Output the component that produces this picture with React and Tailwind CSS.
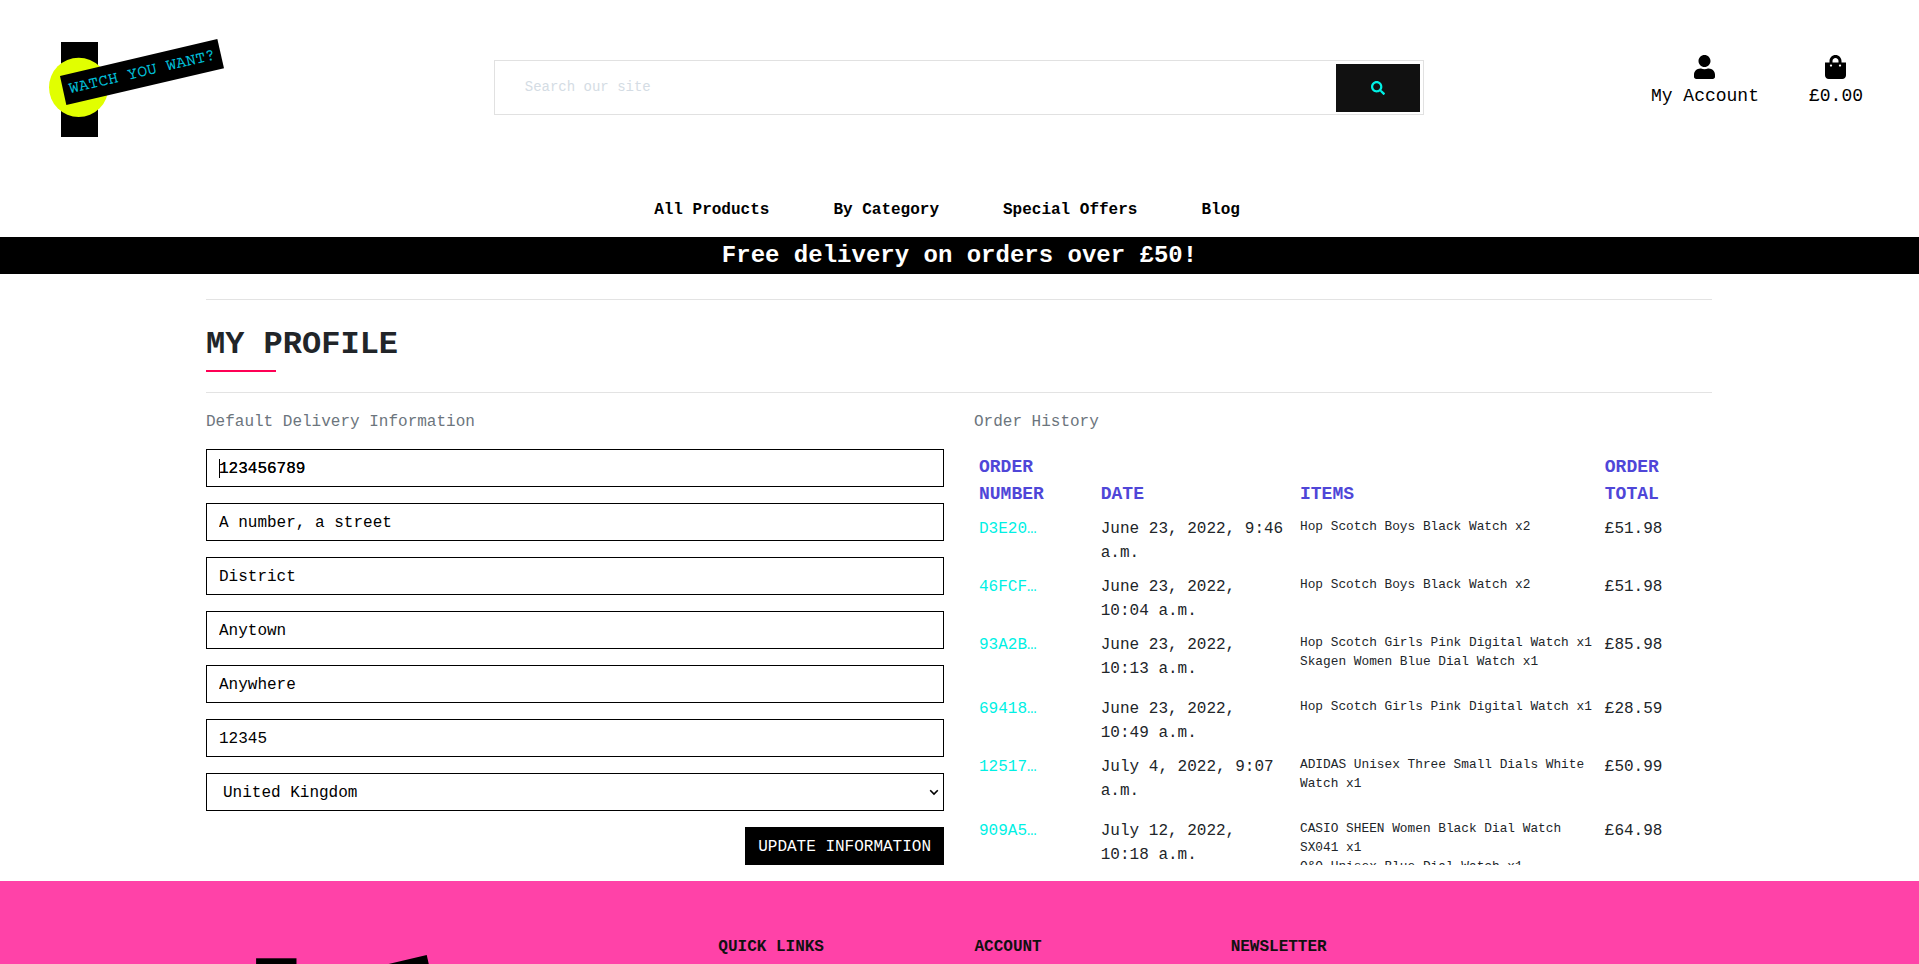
import { FaSearch, FaShoppingBag, FaUser } from "react-icons/fa";

const navLinks = ["All Products", "By Category", "Special Offers", "Blog"];

const fields = [
  { id: "phone", label: "Phone number", value: "123456789", active: true },
  { id: "street1", label: "Street address 1", value: "A number, a street" },
  { id: "street2", label: "Street address 2", value: "District" },
  { id: "town", label: "Town or city", value: "Anytown" },
  { id: "county", label: "County", value: "Anywhere" },
  { id: "postcode", label: "Postcode", value: "12345" },
];

const orders = [
  { id: "D3E20…", date: "June 23, 2022, 9:46 a.m.", items: ["Hop Scotch Boys Black Watch x2"], total: "£51.98" },
  { id: "46FCF…", date: "June 23, 2022, 10:04 a.m.", items: ["Hop Scotch Boys Black Watch x2"], total: "£51.98" },
  {
    id: "93A2B…",
    date: "June 23, 2022, 10:13 a.m.",
    items: ["Hop Scotch Girls Pink Digital Watch x1", "Skagen Women Blue Dial Watch x1"],
    total: "£85.98",
  },
  { id: "69418…", date: "June 23, 2022, 10:49 a.m.", items: ["Hop Scotch Girls Pink Digital Watch x1"], total: "£28.59" },
  { id: "12517…", date: "July 4, 2022, 9:07 a.m.", items: ["ADIDAS Unisex Three Small Dials White Watch x1"], total: "£50.99" },
  {
    id: "909A5…",
    date: "July 12, 2022, 10:18 a.m.",
    items: ["CASIO SHEEN Women Black Dial Watch SX041 x1", "Q&Q Unisex Blue Dial Watch x1"],
    total: "£64.98",
  },
];

function Logo({ className }) {
  return (
    <svg viewBox="147 117 525 294" className={className} role="img" aria-label="Watch you want?">
      <rect x="183" y="126" width="111" height="285" fill="#000" />
      <circle cx="236" cy="262" r="89" fill="#e1ff00" />
      <polygon points="180,228 652,117 672,205 199,315" fill="#000" />
      <text
        transform="translate(211 280) rotate(-13.2)"
        fill="#00bcd4"
        fontSize="50"
        fontFamily="'Courier Prime', 'Liberation Mono', monospace"
      >
        WATCH YOU WANT?
      </text>
    </svg>
  );
}

function Header() {
  return (
    <header>
      <div className="grid h-[175px] grid-cols-[1fr_2fr_1fr] items-center">
        <a href="#home" className="pl-[49px]">
          <Logo className="h-[98px] w-[175px]" />
        </a>
        <form className="mr-[15px] ml-[14px] flex h-[55px] items-center border border-[#e1e1e1] pr-[3px]" onSubmit={(e) => e.preventDefault()}>
          <input
            type="search"
            aria-label="Search our site"
            placeholder="Search our site"
            className="h-full min-w-0 flex-1 px-[30px] pb-0.5 text-sm outline-none placeholder:text-[#d4dce4]"
          />
          <button type="submit" aria-label="Search" className="flex h-12 w-[84px] items-center justify-center bg-[#111] text-[#00f0e4]">
            <FaSearch size={14} />
          </button>
        </form>
        <div className="flex justify-end gap-[50px] pr-14 pb-[10px] text-lg text-black">
          <a href="#account" className="flex flex-col items-center">
            <FaUser className="h-6 w-[21px]" />
            <span className="mt-1 leading-[27px]">My Account</span>
          </a>
          <a href="#bag" className="flex flex-col items-center">
            <FaShoppingBag className="h-6 w-[21px]" />
            <span className="mt-1 leading-[27px]">£0.00</span>
          </a>
        </div>
      </div>
      <nav className="flex justify-center gap-16 pt-[23px] pr-[25px] pb-[15px] font-bold text-black">
        {navLinks.map((name) => (
          <a key={name} href="#shop">
            {name}
          </a>
        ))}
      </nav>
      <p className="bg-black py-1 text-center text-2xl leading-[29px] font-bold text-white">
        Free delivery on orders over £50!
      </p>
    </header>
  );
}

function DeliveryForm() {
  return (
    <form className="flex flex-col gap-4 text-black" onSubmit={(e) => e.preventDefault()}>
      {fields.map(({ id, label, value, active }) => (
        <div key={id} className="relative">
          <input
            id={id}
            type="text"
            aria-label={label}
            defaultValue={value}
            className={
              active
                ? "block h-[38px] w-full border border-black bg-white px-3 pt-0.5 outline-none [text-shadow:0_0_0_#000]"
                : "block h-[38px] w-full border border-black bg-white px-3 pt-0.5 outline-none"
            }
          />
          {active && <span className="absolute top-[10px] left-[13px] h-[19px] w-px bg-black" />}
        </div>
      ))}
      <div className="relative">
        <select
          id="country"
          aria-label="Country"
          defaultValue="GB"
          className="block h-[38px] w-full appearance-none border border-black bg-white pt-0.5 pr-3 pl-4 outline-none"
        >
          <option value="GB">United Kingdom</option>
        </select>
        <svg viewBox="0 0 10 7" className="pointer-events-none absolute top-4 right-[5px] h-[7px] w-[10px]" aria-hidden="true">
          <path d="M1.2 1.2 L5 5 L8.8 1.2" fill="none" stroke="#000" strokeWidth="1.6" />
        </svg>
      </div>
      <button type="submit" className="h-[38px] self-end border border-black bg-black px-3 pt-0.5 text-white">
        UPDATE INFORMATION
      </button>
    </form>
  );
}

function OrderHistory() {
  return (
    <div className="h-[416px] overflow-hidden">
      <table className="w-full table-fixed text-left">
        <thead className="text-lg leading-[27px] text-[#4f46d8]">
          <tr className="align-bottom">
            <th className="w-[16.5%] px-[5px] pt-[5px] pb-1">ORDER NUMBER</th>
            <th className="w-[27%] px-[5px] pt-[5px] pb-1">DATE</th>
            <th className="w-[41.3%] px-[5px] pt-[5px] pb-1">ITEMS</th>
            <th className="px-[5px] pt-[5px] pb-1">
              ORDER
              <br />
              TOTAL
            </th>
          </tr>
        </thead>
        <tbody>
          {orders.map((order) => (
            <tr key={order.id} className="align-top">
              <td className="p-[5px]">
                <a href="#order" className="text-[#00f0e4]">
                  {order.id}
                </a>
              </td>
              <td className="p-[5px]">{order.date}</td>
              <td className="p-[5px]">
                <ul className="mb-4 text-[80%] leading-[19px]">
                  {order.items.map((item) => (
                    <li key={item}>{item}</li>
                  ))}
                </ul>
              </td>
              <td className="p-[5px]">{order.total}</td>
            </tr>
          ))}
        </tbody>
      </table>
    </div>
  );
}

export default function App() {
  return (
    <div className="h-screen overflow-hidden bg-white font-['Liberation_Mono','Courier_New',monospace] text-base leading-6 text-[#212529]">
      <Header />
      <main className="pt-[25px] pr-[207px] pl-[206px]">
        <hr className="border-[#e3e3e3]" />
        <h2 className="pt-[26px] text-[32px] leading-[38px] font-bold">MY PROFILE</h2>
        <div className="mt-1.5 mb-5 h-[2px] w-[70px] bg-[#ff0055]" />
        <hr className="border-[#e3e3e3]" />
        <div className="grid grid-cols-2 gap-[30px] pt-[17px] pb-4">
          <section>
            <p className="mb-[15px] text-[#6c757d]">Default Delivery Information</p>
            <DeliveryForm />
          </section>
          <section>
            <p className="mb-[15px] text-[#6c757d]">Order History</p>
            <OrderHistory />
          </section>
        </div>
      </main>
      <footer className="bg-[#ff42a8] px-[191px] pt-[54px] pb-16 font-bold text-[#111]">
        <div className="grid grid-cols-6">
          <a href="#home" className="col-span-2 pt-5 pl-[52px]">
            <Logo className="h-[107px] w-[191px]" />
          </a>
          <h3 className="px-[15px]">QUICK LINKS</h3>
          <h3 className="px-[15px]">ACCOUNT</h3>
          <h3 className="col-span-2 px-[15px]">NEWSLETTER</h3>
        </div>
      </footer>
    </div>
  );
}
